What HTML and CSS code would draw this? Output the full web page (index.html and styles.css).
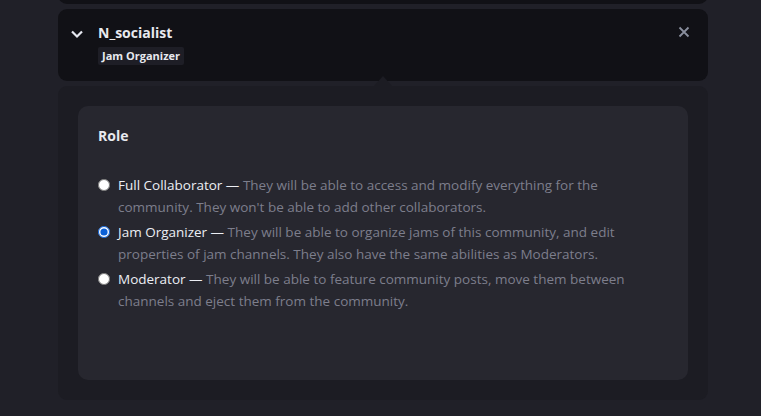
FILE: index.html
```html
<!DOCTYPE html>
<html lang="en">
<head>
    <meta charset="UTF-8">
    <meta name="viewport" content="width=device-width, initial-scale=1.0">
    <title>Collaborators</title>
    <link rel="stylesheet" href="styles.css">
</head>
<body>
    <div class="list">
        <div class="member prev"></div>
        <div class="member open">
            <button class="toggle">
                <svg width="14" height="14" viewBox="0 0 14 14"><path d="M2 4.5 L7 9.5 L12 4.5" fill="none" stroke="#e6e8f0" stroke-width="2.2"/></svg>
            </button>
            <div class="who">
                <div class="name">N_socialist</div>
                <span class="badge">Jam Organizer</span>
            </div>
            <button class="close">
                <svg width="12" height="12" viewBox="0 0 12 12"><path d="M1.5 1.5 L10.5 10.5 M10.5 1.5 L1.5 10.5" stroke="#8a8f9e" stroke-width="1.8"/></svg>
            </button>
        </div>
        <div class="editor">
            <div class="role-card">
                <h3>Role</h3>
                <label class="role">
                    <input type="radio" name="role">
                    <span><b>Full Collaborator —</b> They will be able to access and modify everything for the community. They won't be able to add other collaborators.</span>
                </label>
                <label class="role">
                    <input type="radio" name="role" checked>
                    <span><b>Jam Organizer —</b> They will be able to organize jams of this community, and edit properties of jam channels. They also have the same abilities as Moderators.</span>
                </label>
                <label class="role">
                    <input type="radio" name="role">
                    <span><b>Moderator —</b> They will be able to feature community posts, move them between channels and eject them from the community.</span>
                </label>
            </div>
        </div>
    </div>
</body>
</html>
```

FILE: styles.css
```css
body {
    margin: 0;
    background-color: #202028;
    font-family: "Open Sans", "Noto Sans", sans-serif;
    color: #e8e9ef;
    overflow: hidden;
}
.list {
    width: 650px;
    margin-left: 58px;
    margin-top: -40px;
    display: flex;
    flex-direction: column;
    gap: 5px;
}
.member {
    background-color: #111116;
    border-radius: 9px;
}
.prev {
    height: 44px;
}
.open {
    display: flex;
    align-items: flex-start;
    height: 72px;
    box-sizing: border-box;
    padding: 14px 18px 0 12px;
}
.toggle, .close {
    background: none;
    border: none;
    padding: 0;
    cursor: pointer;
    display: flex;
}
.toggle {
    margin-top: 4px;
    margin-right: 14px;
}
.close {
    margin-top: 3px;
    margin-left: auto;
}
.who {
    display: flex;
    flex-direction: column;
    align-items: flex-start;
}
.name {
    font-size: 14px;
    font-weight: bold;
    line-height: 20px;
}
.badge {
    margin-top: 4px;
    background-color: #1e1e26;
    border-radius: 2px;
    font-size: 11px;
    font-weight: bold;
    line-height: 18px;
    padding: 0 4px;
}
.editor {
    position: relative;
    background-color: #1c1c23;
    border-radius: 9px;
    padding: 20px;
    height: 314px;
    box-sizing: border-box;
}
.editor::before {
    content: "";
    position: absolute;
    left: 316px;
    top: -10px;
    border: 9px solid transparent;
    border-top: 0;
    border-bottom: 10px solid #1c1c23;
}
.role-card {
    background-color: #27272f;
    border-radius: 10px;
    height: 274px;
    box-sizing: border-box;
    padding: 20px 20px;
}
h3 {
    margin: 0 0 28px;
    font-size: 14px;
    line-height: 20px;
    font-weight: bold;
}
.role {
    display: flex;
    align-items: flex-start;
    gap: 8px;
    font-size: 13.5px;
    line-height: 22px;
    color: #7d7e8c;
    margin-bottom: 3px;
    cursor: pointer;
}
.role b {
    color: #eceef4;
    font-weight: normal;
}
.role input {
    margin: 5px 0 0;
    width: 12px;
    height: 12px;
    flex-shrink: 0;
    accent-color: #0a5fd6;
}
```
